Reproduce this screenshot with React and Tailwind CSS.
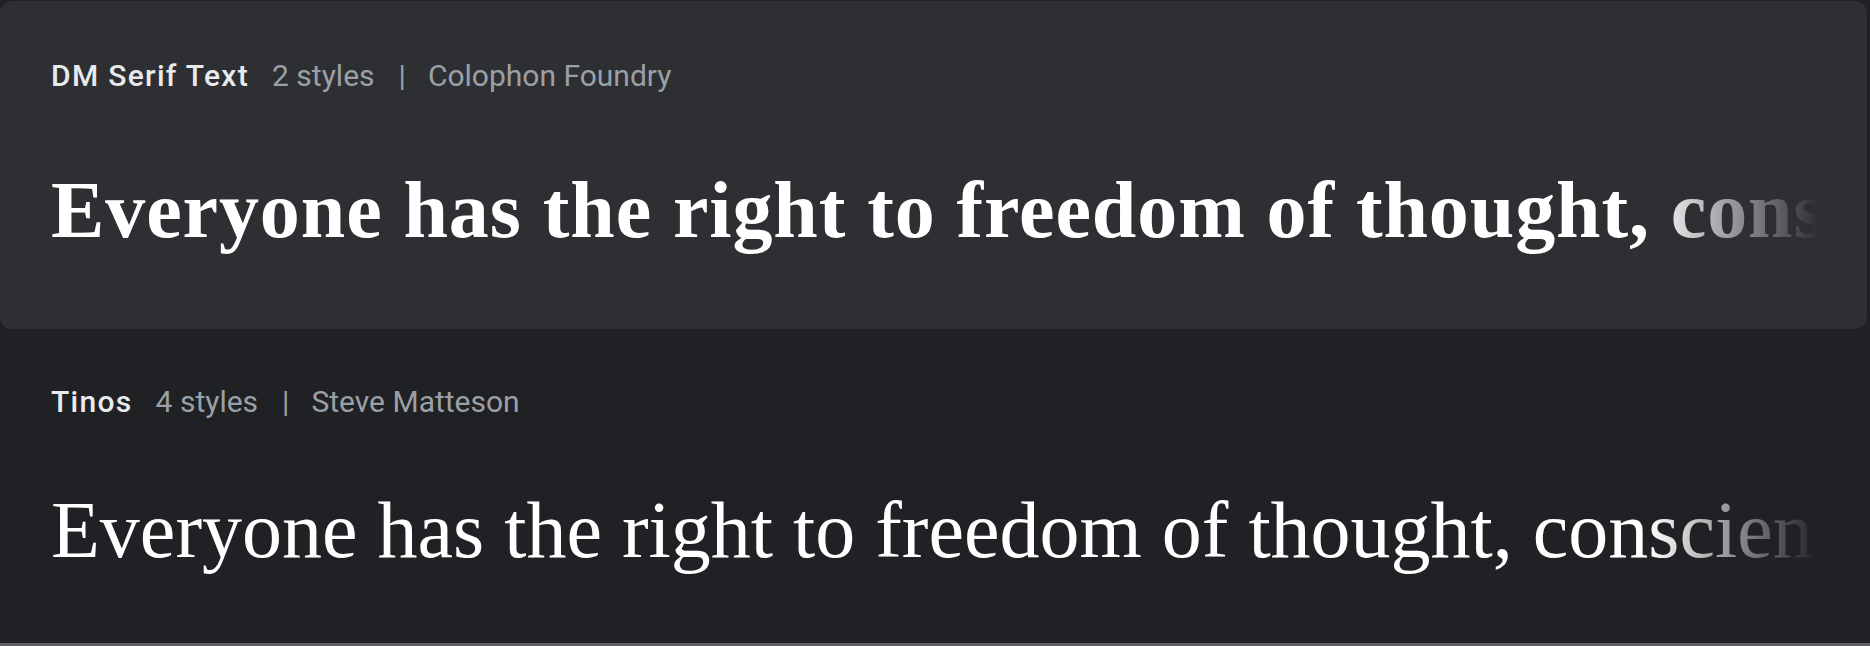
import React from 'react';

const fonts = [
  {
    name: 'DM Serif Text',
    styles: '2 styles',
    designer: 'Colophon Foundry',
    // DM Serif Text is not installed, a bold serif stands in
    sampleClass: "font-['Liberation_Serif',serif] font-bold tracking-[0.9px]",
    card: true,
    sampleTop: 'mt-[55px]',
  },
  {
    name: 'Tinos',
    styles: '4 styles',
    designer: 'Steve Matteson',
    sampleClass: "font-['Liberation_Serif',serif] font-normal",
    card: false,
    sampleTop: 'mt-[49px]',
  },
];

const sample = 'Everyone has the right to freedom of thought, conscience and religion';

const FontRow = ({ font }) => (
  <div
    className={`w-[1867px] pl-[51px] pr-[48px] ${
      font.card ? 'pt-[54px] bg-[#2e2f33] rounded-[12px] h-[328px] shrink-0' : 'pt-[52px] flex-1'
    }`}
  >
    {/* Meta line */}
    <div className="flex items-center h-[40px] text-[30px] font-['Roboto',sans-serif] whitespace-nowrap">
      <span className="text-[#e8eaed] font-medium tracking-[1.3px]">{font.name}</span>
      <span className="ml-[23px] text-[#9aa0a6]">{font.styles}</span>
      <span className="ml-[24px] mr-[22px] text-[#9aa0a6]">|</span>
      <span className="text-[#9aa0a6]">{font.designer}</span>
    </div>

    {/* Sample text, fading out on the right */}
    <div
      className={`${font.sampleTop} overflow-hidden whitespace-nowrap text-white text-[80px] leading-[120px] ${font.sampleClass} [mask-image:linear-gradient(to_right,black_calc(100%-170px),transparent)] [-webkit-mask-image:linear-gradient(to_right,black_calc(100%-170px),transparent)]`}
    >
      {sample}
    </div>
  </div>
);

const App = () => {
  return (
    <div className="w-[1870px] h-[646px] overflow-hidden bg-[#202124] flex flex-col">
      <div className="h-[1px] shrink-0" />
      {fonts.map((font) => (
        <FontRow key={font.name} font={font} />
      ))}
      <div className="h-[3px] shrink-0 bg-[#5f6063]" />
    </div>
  );
};

export default App;
